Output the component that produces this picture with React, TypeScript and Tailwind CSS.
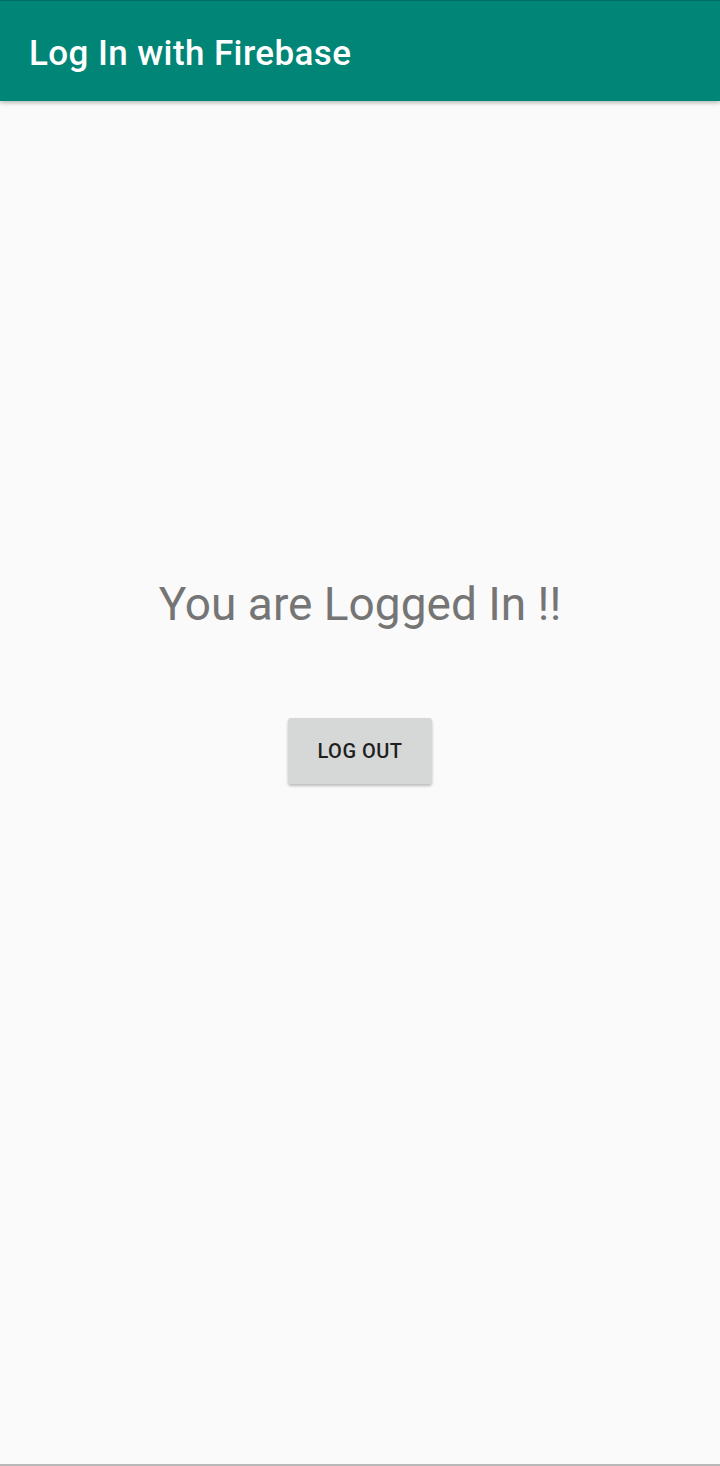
import React from "react";

export default function App() {
  return (
    <div className="w-[720px] h-[1466px] bg-[#fafafa] flex flex-col overflow-hidden" style={{ fontFamily: "Roboto, 'Noto Sans', sans-serif" }}>
      <div className="h-[101px] bg-[#008577] border-t border-[#006b5f] flex items-center pl-[29px] pt-[4px] shadow-[0_2px_4px_rgba(0,0,0,0.25)] shrink-0">
        <span className="text-white text-[35px] font-medium leading-none tracking-[0.4px]">Log In with Firebase</span>
      </div>
      <div className="flex-1 flex flex-col items-center">
        <div className="h-[475px] shrink-0" />
        <div className="text-[#757575] text-[46px] leading-[56px]">You are Logged In !!</div>
        <div className="h-[86px] shrink-0" />
        <button className="w-[144px] h-[66px] bg-[#d6d7d7] rounded-[3px] shadow-[0_2px_3px_rgba(0,0,0,0.25)] text-[#1f1f1f] text-[20px] font-medium tracking-[0.5px] flex items-center justify-center">
          LOG OUT
        </button>
      </div>
      <div className="h-[2px] bg-[#b8b8b8] shrink-0" />
    </div>
  );
}
